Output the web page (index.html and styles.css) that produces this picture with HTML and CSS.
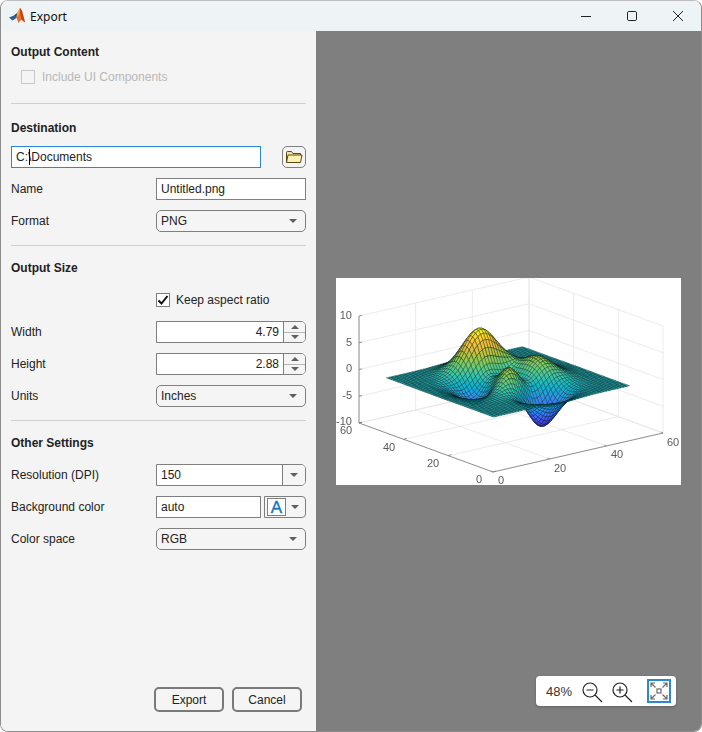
FILE: index.html
```html
<!DOCTYPE html>
<html lang="en">
<head>
    <meta charset="UTF-8">
    <title>Export</title>
    <link rel="stylesheet" href="styles.css">
</head>
<body>
    <div class="window">
        <div class="titlebar">
            <svg class="logo" width="17" height="17" viewBox="0 0 17 17">
                <path d="M0 9.5 L5 7.5 L7.5 10 L3.5 12.5 Z" fill="#2a5f9e"/>
                <path d="M5 7.5 L8 5 L9 7 L7.5 10 Z" fill="#1c3f78"/>
                <path d="M8 5 L11 0 Q12 0 13 3 L16 14.5 L12.5 11.5 L9.5 15 L7.5 10 Z" fill="#e8742a"/>
                <path d="M11 0 L13 3 L16 14.5 L12.5 11.5 L11 5 Z" fill="#c8401c"/>
                <path d="M8 5 L11 0 L10.5 6 L7.5 10 Z" fill="#f5a83a"/>
            </svg>
            <span class="title">Export</span>
            <div class="win-buttons">
                <div class="win-btn"><svg width="12" height="12" viewBox="0 0 12 12"><path d="M1 6.5 H11" stroke="#222" fill="none"/></svg></div>
                <div class="win-btn"><svg width="12" height="12" viewBox="0 0 12 12"><rect x="1.5" y="1.5" width="9" height="9" rx="1.2" stroke="#222" fill="none"/></svg></div>
                <div class="win-btn"><svg width="12" height="12" viewBox="0 0 12 12"><path d="M1 1 L11 11 M11 1 L1 11" stroke="#222" fill="none"/></svg></div>
            </div>
        </div>

        <div class="content">
            <div class="panel">
                <div class="section section-first">
                    <div class="heading heading-tight">Output Content</div>
                    <div class="row indent">
                        <span class="checkbox checkbox-disabled"></span>
                        <span class="check-label disabled">Include UI Components</span>
                    </div>
                </div>

                <div class="section">
                    <div class="heading heading-mid">Destination</div>
                    <div class="row">
                        <div class="field field-focus"><span>C:\</span><span class="caret"></span><span>Documents</span></div>
                        <div class="folder-btn">
                            <svg width="18" height="14" viewBox="0 0 18 14">
                                <path d="M1.5 12.5 V2.5 Q1.5 1.5 2.5 1.5 H6.5 L8 3.5 H15.5 V5" fill="#f3e3a0" stroke="#5b4a12"/>
                                <path d="M1.5 12.5 L3 5 H17 L15.5 12.5 Z" fill="#fdf0b4" stroke="#5b4a12"/>
                            </svg>
                        </div>
                    </div>
                    <div class="row">
                        <label class="label">Name</label>
                        <div class="field field-side">Untitled.png</div>
                    </div>
                    <div class="row">
                        <label class="label">Format</label>
                        <div class="dropdown">PNG<span class="arrow"></span></div>
                    </div>
                </div>

                <div class="section">
                    <div class="heading">Output Size</div>
                    <div class="row">
                        <span class="label"></span>
                        <span class="checkbox"><svg width="14" height="14" viewBox="0 0 14 14"><path d="M2.5 7.5 L5.5 10.5 L11.5 3" stroke="#111" stroke-width="2" fill="none"/></svg></span>
                        <span class="check-label check-label-near">Keep aspect ratio</span>
                    </div>
                    <div class="row">
                        <label class="label">Width</label>
                        <div class="spinner">
                            <div class="spinner-value">4.79</div>
                            <div class="spinner-btns"><span class="spin-btn"><i class="arrow arrow-up"></i></span><span class="spin-btn"><i class="arrow"></i></span></div>
                        </div>
                    </div>
                    <div class="row">
                        <label class="label">Height</label>
                        <div class="spinner">
                            <div class="spinner-value">2.88</div>
                            <div class="spinner-btns"><span class="spin-btn"><i class="arrow arrow-up"></i></span><span class="spin-btn"><i class="arrow"></i></span></div>
                        </div>
                    </div>
                    <div class="row">
                        <label class="label">Units</label>
                        <div class="dropdown">Inches<span class="arrow"></span></div>
                    </div>
                </div>

                <div class="section section-last">
                    <div class="heading">Other Settings</div>
                    <div class="row">
                        <label class="label">Resolution (DPI)</label>
                        <div class="combo">
                            <div class="combo-value">150</div>
                            <div class="combo-btn"><span class="arrow"></span></div>
                        </div>
                    </div>
                    <div class="row">
                        <label class="label">Background color</label>
                        <div class="field field-color">auto</div>
                        <div class="color-btn"><span class="color-swatch">A</span><span class="arrow"></span></div>
                    </div>
                    <div class="row">
                        <label class="label">Color space</label>
                        <div class="dropdown">RGB<span class="arrow"></span></div>
                    </div>
                </div>

                <div class="actions">
                    <button class="btn">Export</button>
                    <button class="btn">Cancel</button>
                </div>
            </div>

            <div class="preview">
                <div class="plot">
                    <svg id="plotSvg" width="345" height="207" viewBox="336 278 345 207">
                        <g id="plotGrid"></g>
                        <g id="plotSurface"></g>
                        <g class="ticks ticks-z">
                            <text x="352" y="319">10</text>
                            <text x="352" y="346">5</text>
                            <text x="352" y="372">0</text>
                            <text x="352" y="399">-5</text>
                            <text x="352" y="425">-10</text>
                        </g>
                        <g class="ticks ticks-xy">
                            <text x="346" y="434">60</text>
                            <text x="389" y="451">40</text>
                            <text x="433" y="467">20</text>
                            <text x="479" y="483">0</text>
                            <text x="501" y="484">0</text>
                            <text x="560" y="472">20</text>
                            <text x="617" y="458">40</text>
                            <text x="673" y="446">60</text>
                        </g>
                    </svg>
                </div>

                <div class="zoom-bar">
                    <span class="zoom-pct">48%</span>
                    <svg class="zoom-icon" width="22" height="22" viewBox="0 0 22 22">
                        <circle cx="9" cy="9" r="7" fill="none" stroke="#222" stroke-width="1.2"/>
                        <path d="M14 14 L21 21 M5.5 9 H12.5" stroke="#222" stroke-width="1.2" fill="none"/>
                    </svg>
                    <svg class="zoom-icon" width="22" height="22" viewBox="0 0 22 22">
                        <circle cx="9" cy="9" r="7" fill="none" stroke="#222" stroke-width="1.2"/>
                        <path d="M14 14 L21 21 M5.5 9 H12.5 M9 5.5 V12.5" stroke="#222" stroke-width="1.2" fill="none"/>
                    </svg>
                    <div class="fit-btn">
                        <svg width="20" height="20" viewBox="0 0 20 20" fill="none" stroke="#6b6b6b" stroke-width="1.2">
                            <rect x="8" y="8" width="4" height="4"/>
                            <path d="M2 6 V2 H6 M2 2 L6.5 6.5 M14 2 H18 V6 M18 2 L13.5 6.5 M2 14 V18 H6 M2 18 L6.5 13.5 M14 18 H18 V14 M18 18 L13.5 13.5"/>
                        </svg>
                    </div>
                </div>
            </div>
        </div>
    </div>
    <script src="plot.js"></script>
</body>
</html>
```

FILE: styles.css
```css
* { box-sizing: border-box; }
html, body { margin: 0; height: 100%; background-color: #fff; }
body { font-family: "Liberation Sans", Arial, sans-serif; font-size: 12px; color: #222; }

.window { width: 702px; height: 732px; border: 1px solid #8c8c8c; border-top-color: #bdbdbd; border-radius: 8px; overflow: hidden; display: flex; flex-direction: column; }

/* title bar */
.titlebar { height: 30px; flex: none; display: flex; align-items: center; background-color: #eef3f6; padding-left: 8px; }
.logo { margin-top: 1px; }
.title { font-family: "Noto Sans", sans-serif; font-size: 12px; margin-left: 4px; color: #111; }
.win-buttons { margin-left: auto; display: flex; }
.win-btn { width: 46px; height: 30px; display: flex; align-items: center; justify-content: center; }

.content { flex: 1; display: flex; min-height: 0; }

/* left panel */
.panel { width: 315px; flex: none; background-color: #f4f4f4; padding: 13px 10px 19px 10px; display: flex; flex-direction: column; }
.section { display: flex; flex-direction: column; gap: 10px; padding-bottom: 13px; margin-bottom: 14px; border-bottom: 1px solid #cfcfcf; }
.section-first { padding-bottom: 15px; margin-bottom: 16px; }
.section-last { border-bottom: none; margin-bottom: 0; padding-bottom: 0; }
.heading { font-weight: bold; line-height: 16px; margin-bottom: 3px; }
.heading-mid { margin-bottom: 0; }
.heading-tight { margin-bottom: -4px; }
.row { display: flex; align-items: center; height: 22px; }
.indent { padding-left: 10px; }
.label { width: 145px; flex: none; }
.disabled { color: #b8b8b8; }

.checkbox { width: 14px; height: 14px; flex: none; border: 1px solid #7f7f7f; background-color: #fff; display: block; }
.checkbox svg { display: block; margin: -1px; }
.checkbox-disabled { border-color: #c8c8c8; background-color: #f4f4f4; }
.check-label { margin-left: 7px; }
.check-label-near { margin-left: 6px; }

.field { height: 22px; background-color: #fff; border: 1px solid #7f7f7f; padding: 0 4px; line-height: 20px; white-space: nowrap; }
.field-side { width: 150px; }
.field-focus { width: 250px; border-color: #2b87d8; display: flex; align-items: center; }
.field-color { width: 105px; }
.caret { width: 1px; height: 16px; background-color: #000; margin-left: -2px; margin-right: 1px; }

.folder-btn { width: 24px; height: 22px; margin-left: 21px; border: 1px solid #7f7f7f; border-radius: 5px; background-color: #f4f4f4; display: flex; align-items: center; justify-content: center; }

.arrow { width: 0; height: 0; display: block; border-left: 4px solid transparent; border-right: 4px solid transparent; border-top: 4px solid #5f5f5f; }
.arrow-up { border-top: none; border-bottom: 4px solid #5f5f5f; }

.dropdown { width: 150px; height: 22px; border: 1px solid #7f7f7f; border-radius: 5px; background-color: #f5f5f5; padding: 0 8px 0 4px; line-height: 20px; display: flex; justify-content: space-between; align-items: center; }

.spinner { width: 150px; height: 22px; display: flex; border: 1px solid #7f7f7f; border-radius: 0 5px 5px 0; background-color: #fff; }
.spinner-value { flex: 1; text-align: right; line-height: 20px; padding-right: 4px; }
.spinner-btns { width: 22px; flex: none; display: flex; flex-direction: column; border-left: 1px solid #7f7f7f; background-color: #f5f5f5; border-radius: 0 4px 4px 0; }
.spin-btn { flex: 1; display: flex; align-items: center; justify-content: center; }
.spin-btn + .spin-btn { border-top: 1px solid #b5b5b5; }

.combo { width: 150px; height: 22px; display: flex; border: 1px solid #7f7f7f; border-radius: 0 5px 5px 0; background-color: #fff; }
.combo-value { flex: 1; padding: 0 4px; line-height: 20px; }
.combo-btn { width: 23px; flex: none; border-left: 1px solid #7f7f7f; background-color: #f5f5f5; border-radius: 0 4px 4px 0; display: flex; align-items: center; justify-content: center; }

.color-btn { width: 42px; height: 22px; margin-left: 3px; border: 1px solid #7f7f7f; border-radius: 0 4px 4px 0; background-color: #f5f5f5; display: flex; align-items: center; padding-left: 2px; }
.color-swatch { width: 19px; height: 18px; border: 1px solid #7f7f7f; background-color: #fff; color: #1a76bd; font-size: 17px; line-height: 17px; text-align: center; margin-right: 5px; -webkit-text-stroke: 0.4px #1a76bd; }

.actions { margin-top: auto; display: flex; gap: 8px; padding-left: 143px; }
.btn { width: 70px; height: 25px; border: 2px solid #7a7a7a; border-radius: 5px; background-color: #f5f5f5; font-family: inherit; font-size: 12px; color: #222; padding: 0; }

/* preview */
.preview { flex: 1; background-color: #7f7f7f; position: relative; display: flex; align-items: center; justify-content: center; }
.plot { width: 345px; height: 207px; background-color: #fff; }
#plotSvg { display: block; filter: blur(0.4px); }
.ticks { font-family: "Liberation Sans", Arial, sans-serif; font-size: 11px; fill: #5a5a5a; text-anchor: middle; }
.ticks-z { text-anchor: end; }

.zoom-bar { position: absolute; right: 25px; bottom: 25px; width: 140px; height: 30px; background-color: #fff; border-radius: 4px; box-shadow: 0 1px 3px rgba(0,0,0,0.25); display: flex; align-items: center; padding-left: 10px; }
.zoom-pct { font-size: 13px; color: #333; width: 35px; flex: none; }
.zoom-icon { margin-right: 8px; flex: none; margin-top: 1px; }
.fit-btn { width: 24px; height: 24px; border: 2px solid #2b87d8; margin-left: 6px; display: flex; align-items: center; justify-content: center; }
```

FILE: plot.js
```js
// surf(peaks) drawn as svg polygons, axes box coordinates taken from the preview image
const NS = 'http://www.w3.org/2000/svg';
const ORIGIN = [493, 472];
const X_AXIS = [170, -39];
const Y_AXIS = [-134, -49];
const Z_SCALE = 5.35;

const PARULA = [
    [62, 38, 168], [71, 71, 235], [62, 111, 255], [39, 150, 235], [8, 181, 208],
    [49, 198, 170], [105, 205, 110], [170, 200, 60], [235, 185, 60], [254, 205, 40], [249, 251, 21]
];

function project(x, y, z) {
    return [
        ORIGIN[0] + X_AXIS[0] * x / 60 + Y_AXIS[0] * y / 60,
        ORIGIN[1] + X_AXIS[1] * x / 60 + Y_AXIS[1] * y / 60 - (z + 10) * Z_SCALE
    ];
}

function peaks(x, y) {
    return 3 * (1 - x) ** 2 * Math.exp(-x * x - (y + 1) ** 2)
        - 10 * (x / 5 - x ** 3 - y ** 5) * Math.exp(-x * x - y * y)
        - 1 / 3 * Math.exp(-((x + 1) ** 2) - y * y);
}

function parula(t) {
    const pos = Math.max(0, Math.min(1, t)) * (PARULA.length - 1);
    const i = Math.min(Math.floor(pos), PARULA.length - 2);
    const f = pos - i;
    const c = PARULA[i].map((v, k) => Math.round(v + (PARULA[i + 1][k] - v) * f));
    return `rgb(${c[0]},${c[1]},${c[2]})`;
}

function addLine(group, a, b, color) {
    const line = document.createElementNS(NS, 'line');
    line.setAttribute('x1', a[0]);
    line.setAttribute('y1', a[1]);
    line.setAttribute('x2', b[0]);
    line.setAttribute('y2', b[1]);
    line.setAttribute('stroke', color);
    line.setAttribute('stroke-width', '0.8');
    group.appendChild(line);
}

function drawGrid() {
    const grid = document.getElementById('plotGrid');
    const light = '#e6e6e6';
    const axis = '#7a7a7a';

    for (let t = 0; t <= 60; t += 20) {
        addLine(grid, project(t, 0, -10), project(t, 60, -10), light);
        addLine(grid, project(0, t, -10), project(60, t, -10), light);
        addLine(grid, project(t, 60, -10), project(t, 60, 10), light);
        addLine(grid, project(60, t, -10), project(60, t, 10), light);
    }
    for (let z = -10; z <= 10; z += 5) {
        addLine(grid, project(0, 60, z), project(60, 60, z), light);
        addLine(grid, project(60, 60, z), project(60, 0, z), light);
    }

    addLine(grid, project(0, 60, -10), project(0, 60, 10), axis);
    addLine(grid, project(0, 60, -10), project(0, 0, -10), axis);
    addLine(grid, project(0, 0, -10), project(60, 0, -10), axis);

    // tick marks
    for (let z = -10; z <= 10; z += 5) {
        const p = project(0, 60, z);
        addLine(grid, p, [p[0] + 3, p[1] - 0.7], axis);
    }
    for (let t = 0; t <= 60; t += 20) {
        const a = project(t, 0, -10);
        addLine(grid, a, [a[0] - 2, a[1] - 1], axis);
        const b = project(0, t, -10);
        addLine(grid, b, [b[0] + 3, b[1] - 1], axis);
    }
}

function drawSurface() {
    const surface = document.getElementById('plotSurface');
    const N = 49;
    const zs = [];
    for (let i = 0; i < N; i++) {
        zs.push([]);
        for (let j = 0; j < N; j++) {
            zs[i].push(peaks(-3 + 6 * i / (N - 1), -3 + 6 * j / (N - 1)));
        }
    }

    // back to front, the corner x=0 y=0 is nearest
    for (let i = N - 2; i >= 0; i--) {
        for (let j = N - 2; j >= 0; j--) {
            const corners = [[i, j], [i + 1, j], [i + 1, j + 1], [i, j + 1]];
            const pts = corners.map(c => project(c[0] + 1, c[1] + 1, zs[c[0]][c[1]]));
            const avg = corners.reduce((s, c) => s + zs[c[0]][c[1]], 0) / 4;
            const poly = document.createElementNS(NS, 'polygon');
            poly.setAttribute('points', pts.map(p => p[0].toFixed(2) + ',' + p[1].toFixed(2)).join(' '));
            poly.setAttribute('fill', parula((avg + 6.55) / 14.65));
            poly.setAttribute('stroke', '#04181e');
            poly.setAttribute('stroke-width', '0.36');
            surface.appendChild(poly);
        }
    }
}

drawGrid();
drawSurface();
```
